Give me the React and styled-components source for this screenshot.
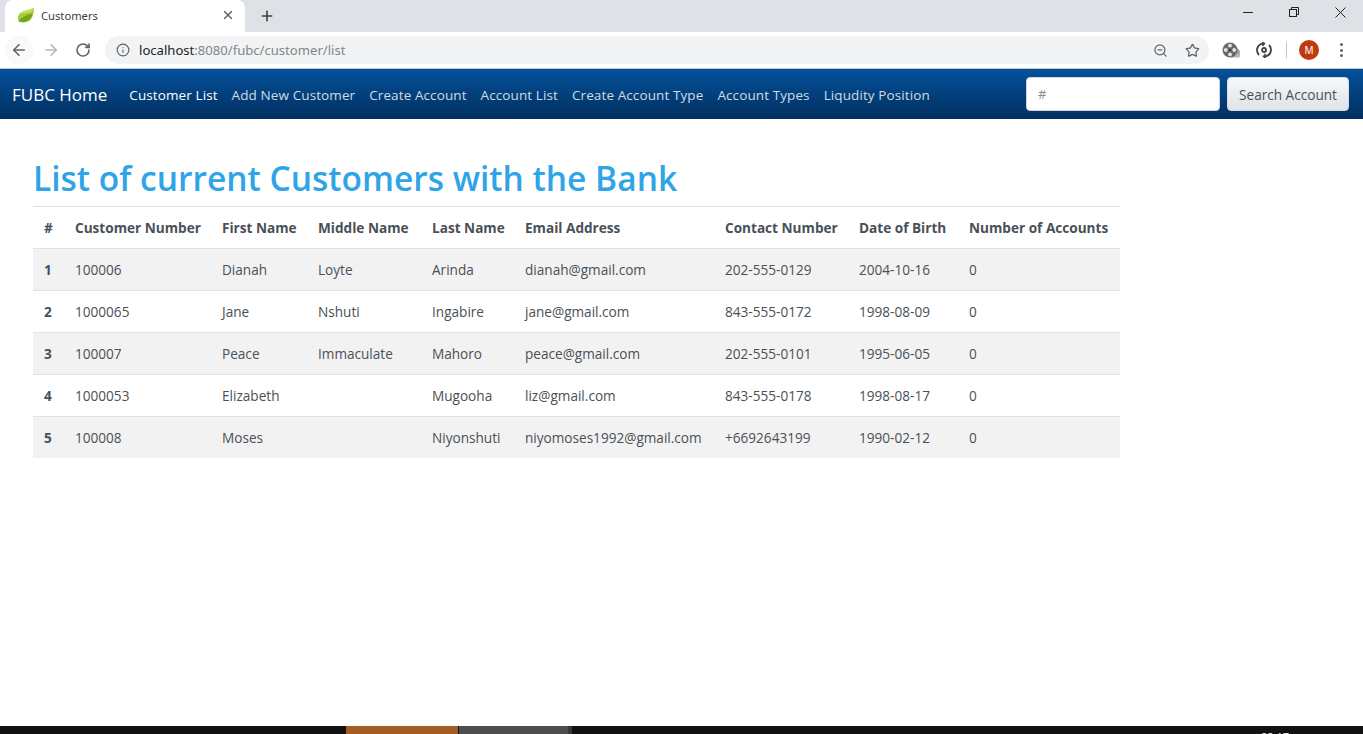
import styled, { createGlobalStyle } from "styled-components";
import { ArrowLeft, ArrowRight, RotateCw, Info, ZoomOut, Star, X, Plus } from "lucide-react";

const GlobalStyle = createGlobalStyle`
  html, body, #root {
    margin: 0;
    height: 100%;
  }
  body {
    font-family: "Open Sans", "Noto Sans", "Liberation Sans", sans-serif;
    background: #fff;
    overflow: hidden;
  }
  * { box-sizing: border-box; }
`;

const Page = styled.div`
  height: 734px;
  display: flex;
  flex-direction: column;
`;

const TabStrip = styled.div`
  height: 32px;
  background: #dee1e6;
  display: flex;
  align-items: flex-end;
  padding-left: 5px;
  flex-shrink: 0;
`;

const Tab = styled.div`
  width: 240px;
  height: 32px;
  background: #fff;
  border-radius: 8px 8px 0 0;
  display: flex;
  align-items: center;
  padding: 0 10px 2px 12px;
  font-family: "Noto Sans", sans-serif;
  font-size: 11.2px;
  color: #3c4043;
`;

const TabTitle = styled.span`
  flex: 1;
  margin-left: 6px;
`;

const NewTab = styled.div`
  width: 44px;
  height: 32px;
  display: flex;
  align-items: center;
  justify-content: center;
  color: #3c4043;
`;

const WindowControls = styled.div`
  margin-left: auto;
  height: 32px;
  display: flex;
  align-items: center;
  padding-bottom: 8px;
  color: #202124;
`;

const WindowButton = styled.div`
  width: 46px;
  display: flex;
  justify-content: center;
`;

const Toolbar = styled.div`
  height: 36px;
  background: #fff;
  display: flex;
  align-items: center;
  padding: 0 5px;
  flex-shrink: 0;
`;

const ToolButton = styled.div`
  width: 28px;
  height: 28px;
  margin-right: 4px;
  border-radius: 50%;
  display: flex;
  align-items: center;
  justify-content: center;
  background: ${(props) => (props.hovered ? "#f8f9f9" : "transparent")};
  color: ${(props) => props.color || "#5f6368"};
`;

const Omnibox = styled.div`
  width: 1104px;
  height: 28px;
  margin: 0 7px 0 4px;
  background: #f1f3f4;
  border-radius: 14px;
  display: flex;
  align-items: center;
  padding: 0 1px 0 11px;
  color: #5f6368;
`;

const Url = styled.div`
  flex: 1;
  margin-left: 9px;
  font-family: "Noto Sans", sans-serif;
  font-size: 13.1px;
  color: #80868b;
`;

const Host = styled.span`
  color: #202124;
`;

const OmniIcon = styled.div`
  width: 32px;
  display: flex;
  justify-content: center;
`;

const Extension = styled.div`
  width: 32px;
  display: flex;
  justify-content: center;
  align-items: center;
`;

const Divider = styled.div`
  width: 1px;
  height: 16px;
  background: #c4c7cb;
  margin: 0 12px 0 6px;
`;

const Avatar = styled.div`
  width: 20px;
  height: 20px;
  border-radius: 50%;
  background: #c13a0c;
  color: #fff;
  font-family: "Noto Sans", sans-serif;
  font-size: 10px;
  display: flex;
  align-items: center;
  justify-content: center;
`;

const Kebab = styled.div`
  margin-left: 21px;
  display: flex;
  flex-direction: column;
  gap: 2.5px;
`;

const KebabDot = styled.span`
  width: 3px;
  height: 3px;
  border-radius: 50%;
  background: #5f6368;
`;

const Navbar = styled.nav`
  height: 51px;
  border-top: 1px solid #c0c4c8;
  background: linear-gradient(#04519b, #012f5f);
  display: flex;
  align-items: center;
  padding: 0 14px 0 12px;
  flex-shrink: 0;
`;

const Brand = styled.a`
  color: #fff;
  font-size: 17px;
  margin-right: 22px;
  padding-top: 1px;
`;

const NavLink = styled.a`
  color: ${(props) => (props.active ? "#fff" : "rgba(255, 255, 255, 0.82)")};
  font-size: 13.5px;
  letter-spacing: 0.1px;
  margin-right: 14px;
  padding-top: 1px;
`;

const SearchForm = styled.form`
  margin-left: auto;
  display: flex;
  gap: 7px;
`;

const SearchInput = styled.input`
  width: 194px;
  height: 34px;
  border: 1px solid #ced4da;
  border-radius: 4px;
  padding: 0 11px;
  font: inherit;
  font-size: 13px;
  outline: none;
  &::placeholder {
    color: #868e96;
  }
`;

const SearchButton = styled.button`
  width: 122px;
  height: 34px;
  border: 1px solid #d8dde2;
  border-radius: 4px;
  background: linear-gradient(#f7f8f9, #dfe3e7);
  color: #495057;
  font: inherit;
  font-size: 13.6px;
  padding: 0;
`;

const Main = styled.main`
  flex: 1;
  padding: 34px 0 0 33px;
`;

const Title = styled.h1`
  margin: 0 0 3px;
  font-size: 33.5px;
  line-height: 50px;
  font-weight: 600;
  color: #2fa4e7;
`;

const Table = styled.table`
  width: 1087px;
  table-layout: fixed;
  border-collapse: collapse;
  font-size: 13.6px;
  color: #495057;
`;

const HeadCell = styled.th`
  height: 42px;
  padding: 0 0 0 11px;
  text-align: left;
  font-weight: 700;
  white-space: nowrap;
  border-top: 1px solid #dee2e6;
  border-bottom: 1px solid #dee2e6;
`;

const Row = styled.tr`
  background: ${(props) => (props.$striped ? "#f2f2f2" : "#fff")};
`;

const Cell = styled.td`
  height: ${(props) => (props.$last ? 41 : 42)}px;
  padding: 0 0 0 11px;
  white-space: nowrap;
  border-top: ${(props) => (props.$first ? "0" : "1px solid #dee2e6")};
  font-weight: ${(props) => (props.$bold ? 700 : 400)};
`;

const Taskbar = styled.div`
  height: 8px;
  background: #111212;
  display: flex;
  flex-shrink: 0;
  overflow: hidden;
`;

const TaskSegment = styled.div`
  width: ${(props) => props.width}px;
  background: ${(props) => props.color};
`;

const Clock = styled.div`
  margin-left: 689px;
  color: #fff;
  font-size: 11px;
  line-height: 13px;
  padding-top: 4px;
`;

const columns = [31, 147, 96, 114, 93, 200, 134, 110, 162];
const headers = ["#", "Customer Number", "First Name", "Middle Name", "Last Name", "Email Address", "Contact Number", "Date of Birth", "Number of Accounts"];
const links = ["Customer List", "Add New Customer", "Create Account", "Account List", "Create Account Type", "Account Types", "Liqudity Position"];
const customers = [
  ["100006", "Dianah", "Loyte", "Arinda", "dianah@gmail.com", "202-555-0129", "2004-10-16", "0"],
  ["1000065", "Jane", "Nshuti", "Ingabire", "jane@gmail.com", "843-555-0172", "1998-08-09", "0"],
  ["100007", "Peace", "Immaculate", "Mahoro", "peace@gmail.com", "202-555-0101", "1995-06-05", "0"],
  ["1000053", "Elizabeth", "", "Mugooha", "liz@gmail.com", "843-555-0178", "1998-08-17", "0"],
  ["100008", "Moses", "", "Niyonshuti", "niyomoses1992@gmail.com", "+6692643199", "1990-02-12", "0"],
];

function Leaf() {
  return (
    <svg width="18" height="16" viewBox="0 0 18 16">
      <path d="M16.800.5C13.500 3.500 5 3 2 7.500.5 9.800.6 12.600 2 14.500c3 1.300 8 1.200 11-1.200C15.800 10.800 17.200 5.500 16.800.5z" fill="#a9cc2e" />
      <path d="M1.600 14C5 9.500 10 8 15.500 6.500 14.800 9.500 13.500 12 11.500 13.500 8.500 15.500 4.500 15.700 2 14.500z" fill="#74a31f" />
      <path d="M16.800.5C13.500 3.500 5 3 2 7.500c3-1.500 9-1 13-3 .8-1 1.400-2.500 1.800-4z" fill="#c9dc62" />
    </svg>
  );
}

function FilmReel() {
  return (
    <svg width="20" height="18" viewBox="0 0 20 18">
      <path d="M11 2.500l6.500 7.500c.8 1.500.8 4 0 6.500H9z" fill="#b4b4b4" />
      <path d="M13 5l5 6M12 7l5 6" stroke="#8a8a8a" strokeWidth="1" />
      <circle cx="8" cy="9" r="7.500" fill="#6a6a6a" />
      <circle cx="8" cy="4.600" r="1.900" fill="#e4e4e4" />
      <circle cx="8" cy="13.400" r="1.900" fill="#e4e4e4" />
      <circle cx="3.800" cy="9" r="1.900" fill="#e4e4e4" />
      <circle cx="12.200" cy="9" r="1.900" fill="#e4e4e4" />
      <circle cx="8" cy="9" r="1" fill="#222" />
    </svg>
  );
}

function SyncCircle() {
  return (
    <svg width="16" height="16" viewBox="0 0 16 16" fill="none" stroke="#444" strokeWidth="1.800">
      <path d="M3 13A6.800 6.800 0 0 1 5 2l3-.5" />
      <path d="M13 3a6.800 6.800 0 0 1-2 11l-3 .5" />
      <path d="M6 0l2.500 1.500L6.500 4M10 16l-2.500-1.500L9.500 12" strokeWidth="1.400" />
      <circle cx="8" cy="8" r="2" />
    </svg>
  );
}

function Restore() {
  return (
    <svg width="10" height="10" viewBox="0 0 10 10" fill="none" stroke="#202124" strokeWidth="1">
      <rect x="0.500" y="2.500" width="7" height="7" />
      <path d="M2.500 2.500v-2h7v7h-2" />
    </svg>
  );
}

function Minimize() {
  return (
    <svg width="10" height="10" viewBox="0 0 10 10" stroke="#202124" strokeWidth="1">
      <path d="M0 5.500h10" />
    </svg>
  );
}

function CloseLine() {
  return (
    <svg width="11" height="11" viewBox="0 0 11 11" stroke="#202124" strokeWidth="1">
      <path d="M.500.500l10 10M10.500.500l-10 10" />
    </svg>
  );
}

export default function App() {
  return (
    <Page>
      <GlobalStyle />
      <TabStrip>
        <Tab>
          <Leaf />
          <TabTitle>Customers</TabTitle>
          <X size={14} strokeWidth={2.400} color="#5f6368" />
        </Tab>
        <NewTab>
          <Plus size={16} strokeWidth={2.400} />
        </NewTab>
        <WindowControls>
          <WindowButton><Minimize /></WindowButton>
          <WindowButton><Restore /></WindowButton>
          <WindowButton><CloseLine /></WindowButton>
        </WindowControls>
      </TabStrip>
      <Toolbar>
        <ToolButton hovered color="#5f6368"><ArrowLeft size={18} strokeWidth={2.200} /></ToolButton>
        <ToolButton color="#b5b7ba"><ArrowRight size={18} strokeWidth={2.200} /></ToolButton>
        <ToolButton><RotateCw size={16} strokeWidth={2.400} /></ToolButton>
        <Omnibox>
          <Info size={14} strokeWidth={2} />
          <Url><Host>localhost</Host>:8080/fubc/customer/list</Url>
          <OmniIcon><ZoomOut size={15} strokeWidth={2} /></OmniIcon>
          <OmniIcon><Star size={15} strokeWidth={2} /></OmniIcon>
        </Omnibox>
        <Extension><FilmReel /></Extension>
        <Extension><SyncCircle /></Extension>
        <Divider />
        <Avatar>M</Avatar>
        <Kebab>
          <KebabDot />
          <KebabDot />
          <KebabDot />
        </Kebab>
      </Toolbar>
      <Navbar>
        <Brand>FUBC Home</Brand>
        {links.map((link, i) => (
          <NavLink key={link} active={i === 0}>{link}</NavLink>
        ))}
        <SearchForm>
          <SearchInput placeholder="#" />
          <SearchButton type="button">Search Account</SearchButton>
        </SearchForm>
      </Navbar>
      <Main>
        <Title>List of current Customers with the Bank</Title>
        <Table>
          <colgroup>
            {columns.map((w, i) => <col key={i} width={w} />)}
          </colgroup>
          <thead>
            <tr>
              {headers.map((h) => <HeadCell key={h}>{h}</HeadCell>)}
            </tr>
          </thead>
          <tbody>
            {customers.map((c, i) => (
              <Row key={c[0]} $striped={i % 2 === 0}>
                <Cell $bold $first={i === 0} $last={i === customers.length - 1}>{i + 1}</Cell>
                {c.map((v, j) => <Cell key={j} $first={i === 0} $last={i === customers.length - 1}>{v}</Cell>)}
              </Row>
            ))}
          </tbody>
        </Table>
      </Main>
      <Taskbar>
        <TaskSegment width={346} color="#111212" />
        <TaskSegment width={112} color="#a45c22" />
        <TaskSegment width={1} color="#111212" />
        <TaskSegment width={109} color="#4d4d4d" />
        <TaskSegment width={4} color="#383838" />
        <Clock>22:17</Clock>
      </Taskbar>
    </Page>
  );
}
